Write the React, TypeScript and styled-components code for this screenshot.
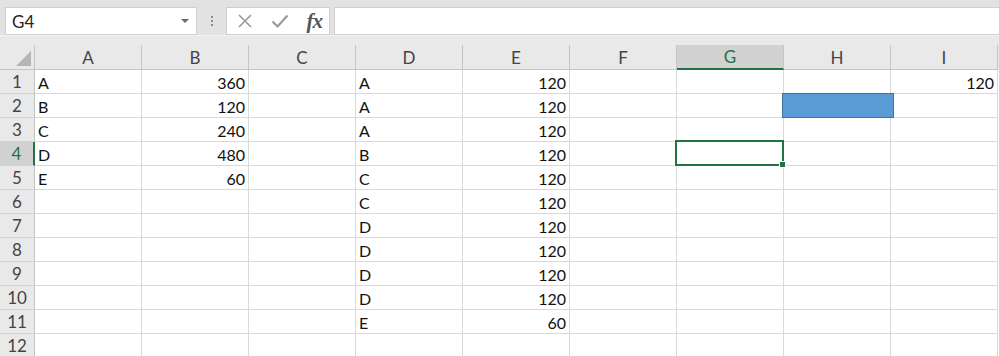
import React from 'react';
import styled, { createGlobalStyle } from 'styled-components';

const GREEN = '#217346';
const GRID = '#d9d9d9';

const Global = createGlobalStyle`
  html, body {
    margin: 0;
    padding: 0;
    background: #ffffff;
    overflow: hidden;
  }
  body {
    font-family: Lato, 'Open Sans', sans-serif;
  }
`;

const Page = styled.div`
  width: 999px;
  height: 356px;
  overflow: hidden;
  background: #ffffff;
`;

const Toolbar = styled.div`
  display: flex;
  align-items: flex-start;
  height: 36px;
  padding: 7px 0 0 5px;
  box-sizing: border-box;
  background: #e2e2e2;
  border-bottom: 1px solid #f2f2f2;
`;

const NameBox = styled.div`
  position: relative;
  display: flex;
  align-items: center;
  width: 192px;
  height: 28px;
  box-sizing: border-box;
  padding-left: 6px;
  background: #ffffff;
  border: 1px solid #cfcfcf;
  font-size: 17px;
  color: #262626;
`;

const DropArrow = styled.span`
  margin-left: auto;
  margin-right: 7px;
  width: 0;
  height: 0;
  border-left: 4px solid transparent;
  border-right: 4px solid transparent;
  border-top: 4px solid #6b6b6b;
`;

const Grip = styled.div`
  display: flex;
  flex-direction: column;
  align-items: center;
  justify-content: center;
  gap: 2px;
  width: 29px;
  height: 28px;
`;

const GripDot = styled.span`
  width: 2px;
  height: 2px;
  background: #8a8a8a;
`;

const FormulaButtons = styled.div`
  display: flex;
  align-items: center;
  justify-content: space-between;
  width: 104px;
  height: 28px;
  box-sizing: border-box;
  padding: 0 7px 0 10px;
  background: #ffffff;
  border: 1px solid #cfcfcf;
`;

const Fx = styled.span`
  font-family: 'Liberation Serif', 'DejaVu Serif', serif;
  font-style: italic;
  font-weight: bold;
  font-size: 21px;
  color: #555555;
  letter-spacing: -1px;
`;

const FormulaInput = styled.div`
  flex: 1;
  height: 28px;
  margin-left: 4px;
  box-sizing: border-box;
  background: #ffffff;
  border: 1px solid #cfcfcf;
  border-right: none;
`;

const HeaderGap = styled.div`
  height: 9px;
  background: #e9e9e9;
`;

const Columns = '35px repeat(9, 107px) 1fr';

const HeaderRow = styled.div`
  display: grid;
  grid-template-columns: ${Columns};
  height: 25px;
  background: #e9e9e9;
`;

const Corner = styled.div`
  position: relative;
  border-right: 1px solid #c4c4c4;
  border-bottom: 1px solid #c4c4c4;
  box-sizing: border-box;
`;

const CornerTriangle = styled.div`
  position: absolute;
  right: 3px;
  bottom: 3px;
  width: 0;
  height: 0;
  border-left: 15px solid transparent;
  border-bottom: 15px solid #b5b5b5;
`;

const ColHead = styled.div<{ $active?: boolean }>`
  display: flex;
  align-items: center;
  justify-content: center;
  box-sizing: border-box;
  font-size: 17px;
  color: ${p => (p.$active ? GREEN : '#444444')};
  background: ${p => (p.$active ? '#d2d2d2' : 'transparent')};
  border-right: 1px solid #c4c4c4;
  border-bottom: ${p => (p.$active ? `2px solid ${GREEN}` : '1px solid #c4c4c4')};
`;

const Body = styled.div`
  position: relative;
`;

const Row = styled.div`
  display: grid;
  grid-template-columns: ${Columns};
  height: 24px;
`;

const RowHead = styled.div<{ $active?: boolean }>`
  display: flex;
  align-items: center;
  justify-content: center;
  box-sizing: border-box;
  font-size: 17px;
  color: ${p => (p.$active ? GREEN : '#444444')};
  background: ${p => (p.$active ? '#d2d2d2' : '#e9e9e9')};
  border-right: ${p => (p.$active ? `2px solid ${GREEN}` : '1px solid #c4c4c4')};
  border-bottom: 1px solid #d4d4d4;
`;

const Cell = styled.div<{ $num?: boolean }>`
  display: flex;
  align-items: center;
  justify-content: ${p => (p.$num ? 'flex-end' : 'flex-start')};
  box-sizing: border-box;
  padding: 1px 3px 0 3px;
  font-size: 16px;
  color: #111111;
  border-right: 1px solid ${GRID};
  border-bottom: 1px solid ${GRID};
  white-space: nowrap;
`;

const Selection = styled.div`
  position: absolute;
  left: 675px;
  top: 70px;
  width: 109px;
  height: 26px;
  box-sizing: border-box;
  border: 2px solid ${GREEN};
`;

const FillHandle = styled.span`
  position: absolute;
  right: -4px;
  bottom: -4px;
  width: 5px;
  height: 5px;
  background: ${GREEN};
  border: 1px solid #ffffff;
`;

const Shape = styled.div`
  position: absolute;
  left: 782px;
  top: 23px;
  width: 112px;
  height: 25px;
  box-sizing: border-box;
  background: #5b9bd5;
  border: 1px solid #41719c;
`;

const letters = ['A', 'B', 'C', 'D', 'E', 'F', 'G', 'H', 'I'];

// row data keyed by column letter; numbers are right aligned
const rows: Record<string, string | number>[] = [
  { A: 'A', B: 360, D: 'A', E: 120, I: 120 },
  { A: 'B', B: 120, D: 'A', E: 120 },
  { A: 'C', B: 240, D: 'A', E: 120 },
  { A: 'D', B: 480, D: 'B', E: 120 },
  { A: 'E', B: 60, D: 'C', E: 120 },
  { D: 'C', E: 120 },
  { D: 'D', E: 120 },
  { D: 'D', E: 120 },
  { D: 'D', E: 120 },
  { D: 'D', E: 120 },
  { D: 'E', E: 60 },
  {},
];

const CrossIcon = () => (
  <svg width="16" height="16" viewBox="0 0 16 16">
    <path d="M2 2 L14 14 M14 2 L2 14" stroke="#9a9a9a" strokeWidth="1.6" fill="none" />
  </svg>
);

const CheckIcon = () => (
  <svg width="18" height="16" viewBox="0 0 18 16">
    <path d="M1.5 8.5 L6.5 13.5 L16.5 2.5" stroke="#9a9a9a" strokeWidth="2.2" fill="none" />
  </svg>
);

const App = () => {
  return <Page>
    <Global />
    <Toolbar>
      <NameBox>
        G4
        <DropArrow />
      </NameBox>
      <Grip>
        <GripDot />
        <GripDot />
        <GripDot />
      </Grip>
      <FormulaButtons>
        <CrossIcon />
        <CheckIcon />
        <Fx>fx</Fx>
      </FormulaButtons>
      <FormulaInput />
    </Toolbar>
    <HeaderGap />
    <HeaderRow>
      <Corner><CornerTriangle /></Corner>
      {letters.map(l => <ColHead key={l} $active={l === 'G'}>{l}</ColHead>)}
      <div />
    </HeaderRow>
    <Body>
      {rows.map((r, i) => (
        <Row key={i}>
          <RowHead $active={i === 3}>{i + 1}</RowHead>
          {letters.map(l => {
            const v = r[l];
            return <Cell key={l} $num={typeof v === 'number'}>{v}</Cell>;
          })}
          <div />
        </Row>
      ))}
      <Shape />
      <Selection><FillHandle /></Selection>
    </Body>
  </Page>;
};

export default App;
